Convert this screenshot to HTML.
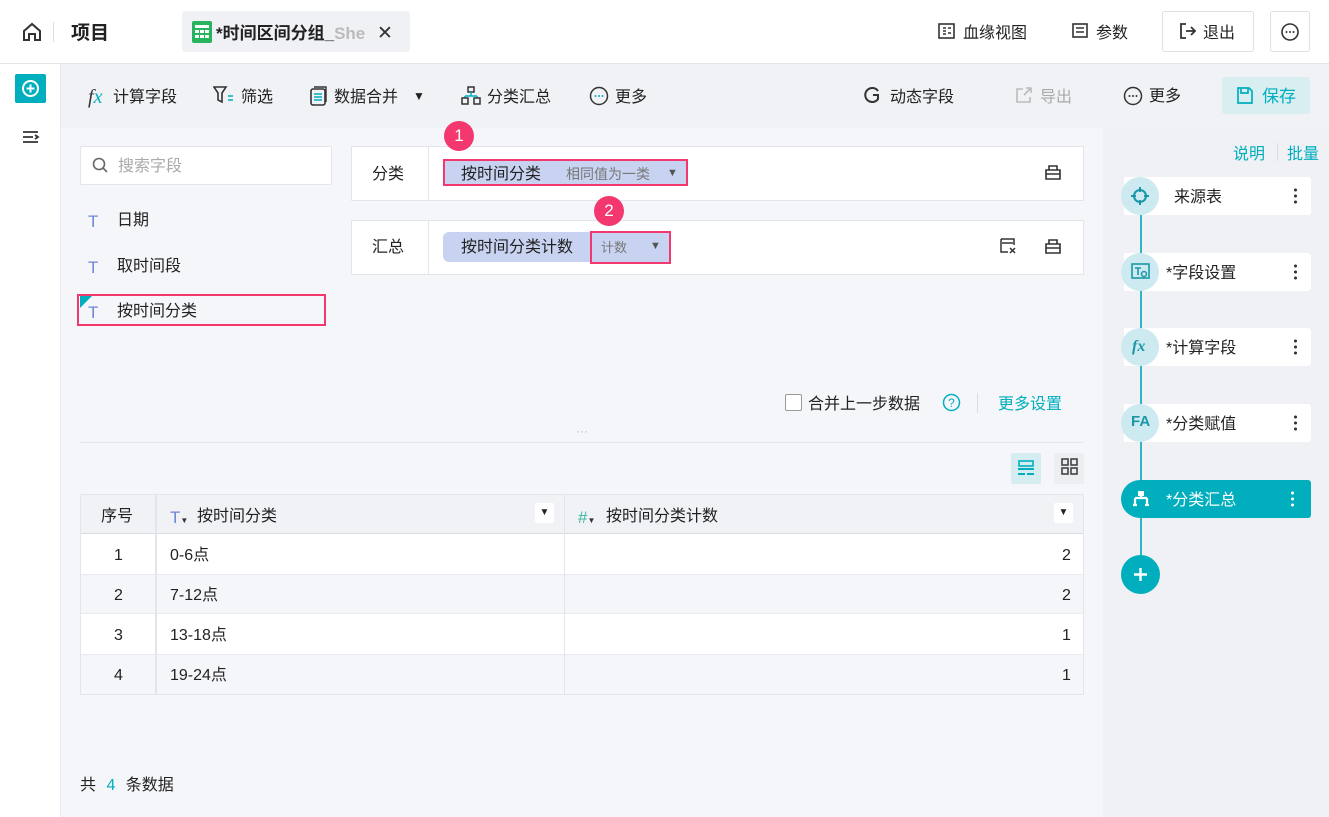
<!DOCTYPE html>
<html><head><meta charset="utf-8"><style>
*{box-sizing:border-box;margin:0;padding:0}
body{width:1329px;height:817px;overflow:hidden;font-family:"Liberation Sans","Noto Sans CJK SC",sans-serif;color:#222;background:#f5f6f9;position:relative;font-size:16px}
.abs{position:absolute}
.top{left:0;top:0;width:1329px;height:64px;background:#fff;border-bottom:1px solid #e3e5ea}
.side{left:0;top:64px;width:61px;height:753px;background:#fff;border-right:1px solid #e8eaef}
.tb{left:61px;top:64px;width:1268px;height:64px;background:#f0f2f6}
.rp{left:1103px;top:128px;width:226px;height:689px;background:#f0f1f5}
.t{position:absolute;white-space:nowrap;line-height:1.25;padding-top:2px}
.btn{border:1px solid #dcdfe6;border-radius:3px;background:#fff}
.node{position:absolute;left:1124px;width:187px;height:38px;background:#fff;border-radius:0 3px 3px 0}
.circ{position:absolute;left:1121px;width:38px;height:38px;border-radius:50%;background:#cdeaf0}
.dots{position:absolute;right:14px;top:10px;width:3px;height:18px;background:radial-gradient(circle,#333 1.4px,transparent 1.6px) 0 0/3px 6px repeat-y}
.pin{position:absolute;width:30px;height:30px;border-radius:50%;background:#f2386f;color:#fff;text-align:center;line-height:30px;font-size:17px}
</style></head><body>
<div class="abs top"></div>
<svg class="abs" style="left:21px;top:21px" width="22" height="22" viewBox="0 0 22 22"><path d="M3 10L11 3l8 7v9h-5v-6h-6v6H3z" fill="none" stroke="#333" stroke-width="2"/></svg>
<div class="abs" style="left:53px;top:22px;width:1px;height:20px;background:#ddd"></div>
<div class="t" style="left:71px;top:20px;font-size:19px;font-weight:bold;color:#222">项目</div>
<div class="abs" style="left:182px;top:11px;width:228px;height:41px;background:#f0f1f5;border-radius:3px"></div>
<svg class="abs" style="left:192px;top:21px" width="20" height="22"><rect width="20" height="22" rx="2" fill="#26b45e"/><g fill="#fff"><rect x="3" y="4" width="14" height="3"/><rect x="3" y="9" width="4" height="3"/><rect x="8" y="9" width="4" height="3"/><rect x="13" y="9" width="4" height="3"/><rect x="3" y="14" width="4" height="3"/><rect x="8" y="14" width="4" height="3"/><rect x="13" y="14" width="4" height="3"/></g></svg>
<div class="t" style="left:216px;top:21px;font-size:17px;font-weight:bold;color:#222;width:150px;overflow:hidden">*时间区间分组_<span style="color:#bbb">She</span></div>
<div class="t" style="left:377px;top:20px;font-size:19px;color:#333">✕</div>
<svg class="abs" style="left:938px;top:23px" width="17" height="16"><rect x="1" y="1" width="15" height="14" fill="none" stroke="#333" stroke-width="1.6"/><path d="M5 5h3M5 8h3M5 11h3M10 5h3M10 10h3" stroke="#333" stroke-width="1.6"/></svg>
<div class="t" style="left:963px;top:22px;font-size:16px">血缘视图</div>
<svg class="abs" style="left:1072px;top:23px" width="16" height="15"><rect x="1" y="1" width="14" height="13" fill="none" stroke="#333" stroke-width="1.6"/><path d="M4 5h8M4 9h8" stroke="#333" stroke-width="1.6"/></svg>
<div class="t" style="left:1096px;top:22px;font-size:16px">参数</div>
<div class="abs btn" style="left:1162px;top:11px;width:92px;height:41px"></div>
<svg class="abs" style="left:1179px;top:22px" width="18" height="18"><path d="M7 2H2v14h5M7 9h9M12 5l4 4-4 4" fill="none" stroke="#333" stroke-width="1.8"/></svg>
<div class="t" style="left:1203px;top:22px;font-size:16px">退出</div>
<div class="abs btn" style="left:1270px;top:11px;width:40px;height:41px"></div>
<svg class="abs" style="left:1280px;top:22px" width="20" height="20"><circle cx="10" cy="10" r="8" fill="none" stroke="#333" stroke-width="1.6"/><circle cx="6.5" cy="10" r="1" fill="#333"/><circle cx="10" cy="10" r="1" fill="#333"/><circle cx="13.5" cy="10" r="1" fill="#333"/></svg>

<div class="abs side"></div>
<div class="abs" style="left:15px;top:74px;width:31px;height:29px;background:#00aebe;border-radius:2px"></div>
<svg class="abs" style="left:21px;top:79px" width="19" height="19"><circle cx="9.5" cy="9.5" r="7.5" fill="none" stroke="#fff" stroke-width="2"/><path d="M9.5 5.5v8M5.5 9.5h8" stroke="#fff" stroke-width="2"/></svg>
<svg class="abs" style="left:22px;top:130px" width="18" height="16"><path d="M1 2h15M1 7h10M1 12h15M13 5l3 2-3 2" stroke="#333" stroke-width="1.8" fill="none"/></svg>

<div class="abs tb"></div>
<div class="t" style="left:88px;top:83px;font-size:20px;font-style:italic;font-family:'Liberation Serif',serif;color:#333">f<span style="color:#00aebe">x</span></div>
<div class="t" style="left:113px;top:86px">计算字段</div>
<svg class="abs" style="left:213px;top:86px" width="24" height="19"><path d="M1 1h12l-4 6v9l-4-2V7z" fill="none" stroke="#333" stroke-width="1.6"/><path d="M15 10h5M15 14h5" stroke="#00aebe" stroke-width="1.6"/></svg>
<div class="t" style="left:241px;top:86px">筛选</div>
<svg class="abs" style="left:310px;top:86px" width="18" height="20"><rect x="1" y="3" width="14" height="16" rx="2" fill="none" stroke="#333" stroke-width="1.6"/><path d="M4 1h12v15" fill="none" stroke="#333" stroke-width="1.4"/><path d="M4 8h8M4 11h8M4 14h8" stroke="#00aebe" stroke-width="1.4"/></svg>
<div class="t" style="left:334px;top:86px">数据合并</div>
<div class="t" style="left:413px;top:87px;font-size:12px">▼</div>
<svg class="abs" style="left:461px;top:86px" width="20" height="19"><rect x="7" y="1" width="6" height="5" fill="none" stroke="#333" stroke-width="1.5"/><path d="M10 6v4M4 10h12M4 10v2M16 10v2" stroke="#00aebe" stroke-width="1.5" fill="none"/><rect x="1" y="12" width="6" height="6" fill="none" stroke="#333" stroke-width="1.5"/><rect x="13" y="12" width="6" height="6" fill="none" stroke="#333" stroke-width="1.5"/></svg>
<div class="t" style="left:487px;top:86px">分类汇总</div>
<svg class="abs" style="left:589px;top:86px" width="20" height="20"><circle cx="10" cy="10" r="8.5" fill="none" stroke="#333" stroke-width="1.5"/><circle cx="6.5" cy="10" r="1" fill="#00aebe"/><circle cx="10" cy="10" r="1" fill="#00aebe"/><circle cx="13.5" cy="10" r="1" fill="#00aebe"/></svg>
<div class="t" style="left:615px;top:86px">更多</div>
<svg class="abs" style="left:864px;top:86px" width="16" height="18"><path d="M14 5A7 7 0 1 0 14 13V9H9" fill="none" stroke="#333" stroke-width="2"/></svg>
<div class="t" style="left:890px;top:86px">动态字段</div>
<svg class="abs" style="left:1015px;top:86px" width="18" height="18"><path d="M8 3H2v13h13v-5M9 9l7-7M11 2h5v5" fill="none" stroke="#bbb" stroke-width="1.6"/></svg>
<div class="t" style="left:1040px;top:86px;color:#aaa">导出</div>
<svg class="abs" style="left:1123px;top:86px" width="20" height="20"><circle cx="10" cy="10" r="8.5" fill="none" stroke="#333" stroke-width="1.5"/><circle cx="6.5" cy="10" r="1" fill="#333"/><circle cx="10" cy="10" r="1" fill="#333"/><circle cx="13.5" cy="10" r="1" fill="#333"/></svg>
<div class="t" style="left:1149px;top:85px">更多</div>
<div class="abs" style="left:1222px;top:77px;width:88px;height:37px;background:#d8eef1;border-radius:3px"></div>
<svg class="abs" style="left:1237px;top:87px" width="16" height="17"><path d="M1 1h11l3 3v12H1z M4 1v5h7V1" fill="none" stroke="#00aebe" stroke-width="1.7"/></svg>
<div class="t" style="left:1262px;top:84px;color:#00aebe;font-size:17px">保存</div>

<div class="abs" style="left:80px;top:146px;width:252px;height:39px;background:#fff;border:1px solid #e3e5ea;border-radius:2px"></div>
<svg class="abs" style="left:92px;top:157px" width="17" height="17"><circle cx="7" cy="7" r="5.5" fill="none" stroke="#666" stroke-width="1.6"/><path d="M11 11l4 4" stroke="#666" stroke-width="1.6"/></svg>
<div class="t" style="left:118px;top:155px;color:#aaa">搜索字段</div>
<div class="t" style="left:88px;top:209px;color:#6d87d8;font-size:17px">T</div><div class="t" style="left:117px;top:209px">日期</div>
<div class="t" style="left:88px;top:255px;color:#6d87d8;font-size:17px">T</div><div class="t" style="left:117px;top:255px">取时间段</div>
<div class="abs" style="left:77px;top:294px;width:249px;height:32px;border:2px solid #f2386f"></div>
<div class="abs" style="left:80px;top:296px;width:0;height:0;border-top:12px solid #00aebe;border-right:12px solid transparent"></div>
<div class="t" style="left:88px;top:300px;color:#6d87d8;font-size:17px">T</div><div class="t" style="left:117px;top:300px">按时间分类</div>

<div class="abs" style="left:351px;top:146px;width:733px;height:55px;background:#fff;border:1px solid #e3e5ea"></div>
<div class="abs" style="left:428px;top:146px;width:1px;height:55px;background:#e3e5ea"></div>
<div class="t" style="left:372px;top:163px">分类</div>
<div class="abs" style="left:443px;top:159px;width:245px;height:27px;background:#c7d3f0;border:2px solid #f2386f"></div>
<div class="t" style="left:461px;top:163px">按时间分类</div>
<div class="t" style="left:566px;top:164px;font-size:14px;color:#777">相同值为一类</div>
<div class="t" style="left:667px;top:165px;font-size:11px;color:#555">▼</div>
<svg class="abs" style="left:1044px;top:163px" width="18" height="17"><path d="M2 7h14v9H2zM5 7V3h8v4M2 11h14" fill="none" stroke="#333" stroke-width="1.6"/></svg>
<div class="abs" style="left:351px;top:220px;width:733px;height:55px;background:#fff;border:1px solid #e3e5ea"></div>
<div class="abs" style="left:428px;top:220px;width:1px;height:55px;background:#e3e5ea"></div>
<div class="t" style="left:372px;top:236px">汇总</div>
<div class="abs" style="left:443px;top:232px;width:228px;height:30px;background:#c7d3f0;border-radius:6px 0 0 6px"></div>
<div class="abs" style="left:590px;top:231px;width:81px;height:33px;border:2px solid #f2386f"></div>
<div class="t" style="left:461px;top:236px">按时间分类计数</div>
<div class="t" style="left:601px;top:238px;font-size:13px;color:#777">计数</div>
<div class="t" style="left:650px;top:238px;font-size:11px;color:#555">▼</div>
<svg class="abs" style="left:999px;top:237px" width="18" height="18"><path d="M2 2h13v6M2 2v13h7M3 6h11" fill="none" stroke="#333" stroke-width="1.5"/><path d="M11 11l5 5M16 11l-5 5" stroke="#333" stroke-width="1.5"/></svg>
<svg class="abs" style="left:1044px;top:237px" width="18" height="17"><path d="M2 7h14v9H2zM5 7V3h8v4M2 11h14" fill="none" stroke="#333" stroke-width="1.6"/></svg>
<div class="pin" style="left:444px;top:121px">1</div>
<div class="pin" style="left:594px;top:196px">2</div>

<div class="abs" style="left:785px;top:394px;width:17px;height:17px;border:1px solid #999;border-radius:2px;background:#fff"></div>
<div class="t" style="left:808px;top:393px">合并上一步数据</div>
<svg class="abs" style="left:942px;top:393px" width="19" height="19"><circle cx="9.5" cy="9.5" r="8" fill="none" stroke="#00aebe" stroke-width="1.5"/><text x="9.5" y="14" text-anchor="middle" font-size="12" fill="#00aebe" font-family="Liberation Sans">?</text></svg>
<div class="abs" style="left:977px;top:393px;width:1px;height:20px;background:#ddd"></div>
<div class="t" style="left:998px;top:393px;color:#00aebe">更多设置</div>
<div class="abs" style="left:80px;top:442px;width:1003px;height:1px;background:#e3e5ea"></div>
<div class="t" style="left:576px;top:422px;color:#bbb;font-size:12px">···</div>
<div class="abs" style="left:1011px;top:453px;width:30px;height:31px;background:#d5edf1;border-radius:2px"></div>
<svg class="abs" style="left:1017px;top:459px" width="18" height="18"><rect x="2" y="2" width="14" height="5" fill="none" stroke="#00aebe" stroke-width="1.6"/><path d="M1 10h16M1 15h7M10 15h7" stroke="#00aebe" stroke-width="2"/></svg>
<div class="abs" style="left:1054px;top:453px;width:30px;height:31px;background:#eceef2;border-radius:2px"></div>
<svg class="abs" style="left:1061px;top:458px" width="17" height="17"><g fill="none" stroke="#444" stroke-width="1.6"><rect x="1" y="1" width="6" height="6"/><rect x="10" y="1" width="6" height="6"/><rect x="1" y="10" width="6" height="6"/><rect x="10" y="10" width="6" height="6"/></g></svg>

<div class="abs" style="left:80px;top:494px;width:1004px;height:201px;border:1px solid #e3e5ea;background:#fff"></div>
<div class="abs" style="left:81px;top:495px;width:1002px;height:39px;background:#f0f2f6;border-bottom:1px solid #d8dbe2"></div>
<div class="abs" style="left:81px;top:574px;width:1002px;height:40px;background:#f5f6f9;border-top:1px solid #e8eaef;border-bottom:1px solid #e8eaef"></div>
<div class="abs" style="left:81px;top:654px;width:1002px;height:40px;background:#f5f6f9;border-top:1px solid #e8eaef"></div>
<div class="abs" style="left:155px;top:495px;width:2px;height:199px;background:#e3e5ea"></div>
<div class="abs" style="left:564px;top:495px;width:1px;height:199px;background:#e3e5ea"></div>
<div class="t" style="left:101px;top:505px">序号</div>
<div class="t" style="left:170px;top:505px;color:#6d87d8;font-size:17px">T<span style="font-size:8px;color:#333">▼</span></div>
<div class="t" style="left:197px;top:505px">按时间分类</div>
<div class="abs" style="left:535px;top:503px;width:19px;height:20px;background:#fff;border-radius:2px;font-size:10px;text-align:center;line-height:20px">▼</div>
<div class="t" style="left:578px;top:505px;color:#3bb8a0;font-size:17px">#<span style="font-size:8px;color:#333">▼</span></div>
<div class="t" style="left:606px;top:505px">按时间分类计数</div>
<div class="abs" style="left:1054px;top:503px;width:19px;height:20px;background:#fff;border-radius:2px;font-size:10px;text-align:center;line-height:20px">▼</div>
<div class="t" style="left:114px;top:544px">1</div><div class="t" style="left:170px;top:544px">0-6点</div><div class="t" style="left:1062px;top:544px">2</div>
<div class="t" style="left:114px;top:584px">2</div><div class="t" style="left:170px;top:584px">7-12点</div><div class="t" style="left:1062px;top:584px">2</div>
<div class="t" style="left:114px;top:624px">3</div><div class="t" style="left:170px;top:624px">13-18点</div><div class="t" style="left:1062px;top:624px">1</div>
<div class="t" style="left:114px;top:664px">4</div><div class="t" style="left:170px;top:664px">19-24点</div><div class="t" style="left:1062px;top:664px">1</div>
<div class="t" style="left:80px;top:774px">共 <span style="color:#00aebe;margin:0 6px">4</span> 条数据</div>

<div class="abs rp"></div>
<div class="t" style="left:1233px;top:143px;color:#00aebe">说明</div>
<div class="abs" style="left:1277px;top:143px;width:1px;height:18px;background:#ddd"></div>
<div class="t" style="left:1287px;top:143px;color:#00aebe">批量</div>
<div class="abs" style="left:1140px;top:200px;width:2px;height:370px;background:#2fb5c6"></div>
<div class="node" style="top:177px"><div class="t" style="left:50px;top:9px">来源表</div><div class="dots"></div></div>
<div class="circ" style="top:177px"></div>
<svg class="abs" style="left:1130px;top:186px" width="20" height="20"><circle cx="10" cy="10" r="6" fill="none" stroke="#1a98a8" stroke-width="2"/><path d="M10 1v5M10 14v5M1 10h5M14 10h5" stroke="#1a98a8" stroke-width="2"/></svg>
<div class="node" style="top:253px"><div class="t" style="left:42px;top:9px">*字段设置</div><div class="dots"></div></div>
<div class="circ" style="top:253px"></div>
<svg class="abs" style="left:1131px;top:263px" width="19" height="17"><rect x="1" y="1" width="17" height="14" fill="none" stroke="#1a98a8" stroke-width="1.6"/><path d="M4 5h6M7 5v7" stroke="#1a98a8" stroke-width="1.6"/><circle cx="13" cy="11" r="2.5" fill="none" stroke="#1a98a8" stroke-width="1.5"/></svg>
<div class="node" style="top:328px"><div class="t" style="left:42px;top:9px">*计算字段</div><div class="dots"></div></div>
<div class="circ" style="top:328px"></div>
<div class="t" style="left:1132px;top:335px;color:#1a98a8;font-style:italic;font-weight:bold;font-size:16px;font-family:'Liberation Serif',serif">fx</div>
<div class="node" style="top:404px"><div class="t" style="left:42px;top:9px">*分类赋值</div><div class="dots"></div></div>
<div class="circ" style="top:404px"></div>
<div class="t" style="left:1131px;top:411px;color:#1a98a8;font-weight:bold;font-size:15px">FA</div>
<div class="abs" style="left:1121px;top:480px;width:190px;height:38px;background:#00aebe;border-radius:19px 3px 3px 19px"></div>
<svg class="abs" style="left:1132px;top:489px" width="18" height="18"><path d="M9 2v6M3 9h12M3 9v7M15 9v7M1 16h4M13 16h4" stroke="#fff" stroke-width="2.2" fill="none"/><rect x="6" y="2" width="6" height="5" fill="#fff"/></svg>
<div class="t" style="left:1166px;top:489px;color:#fff">*分类汇总</div>
<div class="abs" style="left:1291px;top:490px;width:3px;height:18px;background:radial-gradient(circle,#fff 1.4px,transparent 1.6px) 0 0/3px 6px repeat-y"></div>
<div class="abs" style="left:1121px;top:555px;width:39px;height:39px;border-radius:50%;background:#00aebe"></div>
<svg class="abs" style="left:1131px;top:565px" width="19" height="19"><path d="M9.5 3v13M3 9.5h13" stroke="#fff" stroke-width="2.4"/></svg>
</body></html>
